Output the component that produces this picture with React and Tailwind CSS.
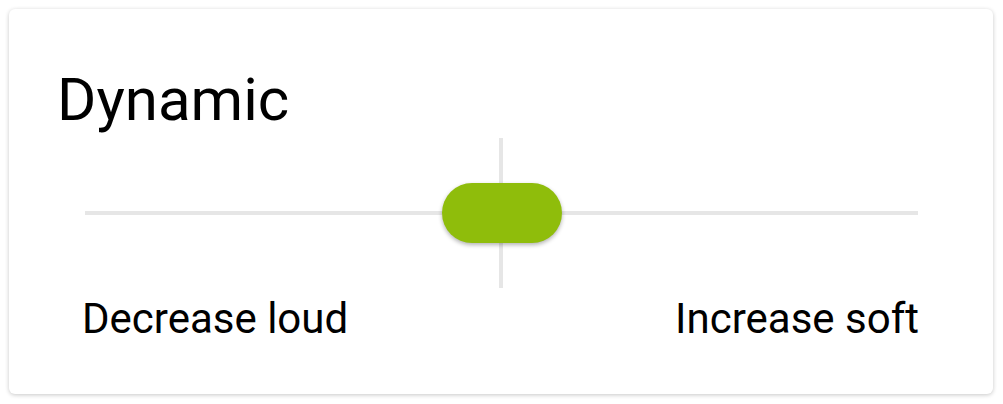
import React from "react";

const DynamicCard = () => {
  return (
    <div className="rounded-[6px] bg-white shadow-[0_1px_4px_rgba(0,0,0,0.22)] px-[48px] pt-[56px] pb-[48px]">
      <h2 className="text-[60px] leading-[70px] text-black font-['Roboto',sans-serif]">Dynamic</h2>

      {/* slider: track halves around the thumb, centre tick behind */}
      <div className="relative flex items-center ml-[28px] mr-[27px] h-[150px] mt-[3px]">
        <div className="absolute inset-y-0 left-1/2 w-[4px] -ml-[3px] bg-[#e6e6e6]" />
        <div className="flex-1 h-[4px] bg-[#e6e6e6]" />
        <div className="relative z-10 h-[60px] w-[120px] rounded-full bg-[#8fbd0b] shadow-[0_2px_4px_rgba(0,0,0,0.3)]" />
        <div className="flex-1 h-[4px] bg-[#e6e6e6]" />
      </div>

      <div className="flex justify-between pl-[25px] pr-[26px] mt-[4px] text-[42px] leading-[54px] text-black font-['Roboto',sans-serif]">
        <span>Decrease loud</span>
        <span>Increase soft</span>
      </div>
    </div>
  );
};

export default function App() {
  return (
    <div className="w-[1003px] h-[404px] bg-white pl-[9px] pr-[10px] pt-[9px]">
      <DynamicCard />
    </div>
  );
}
